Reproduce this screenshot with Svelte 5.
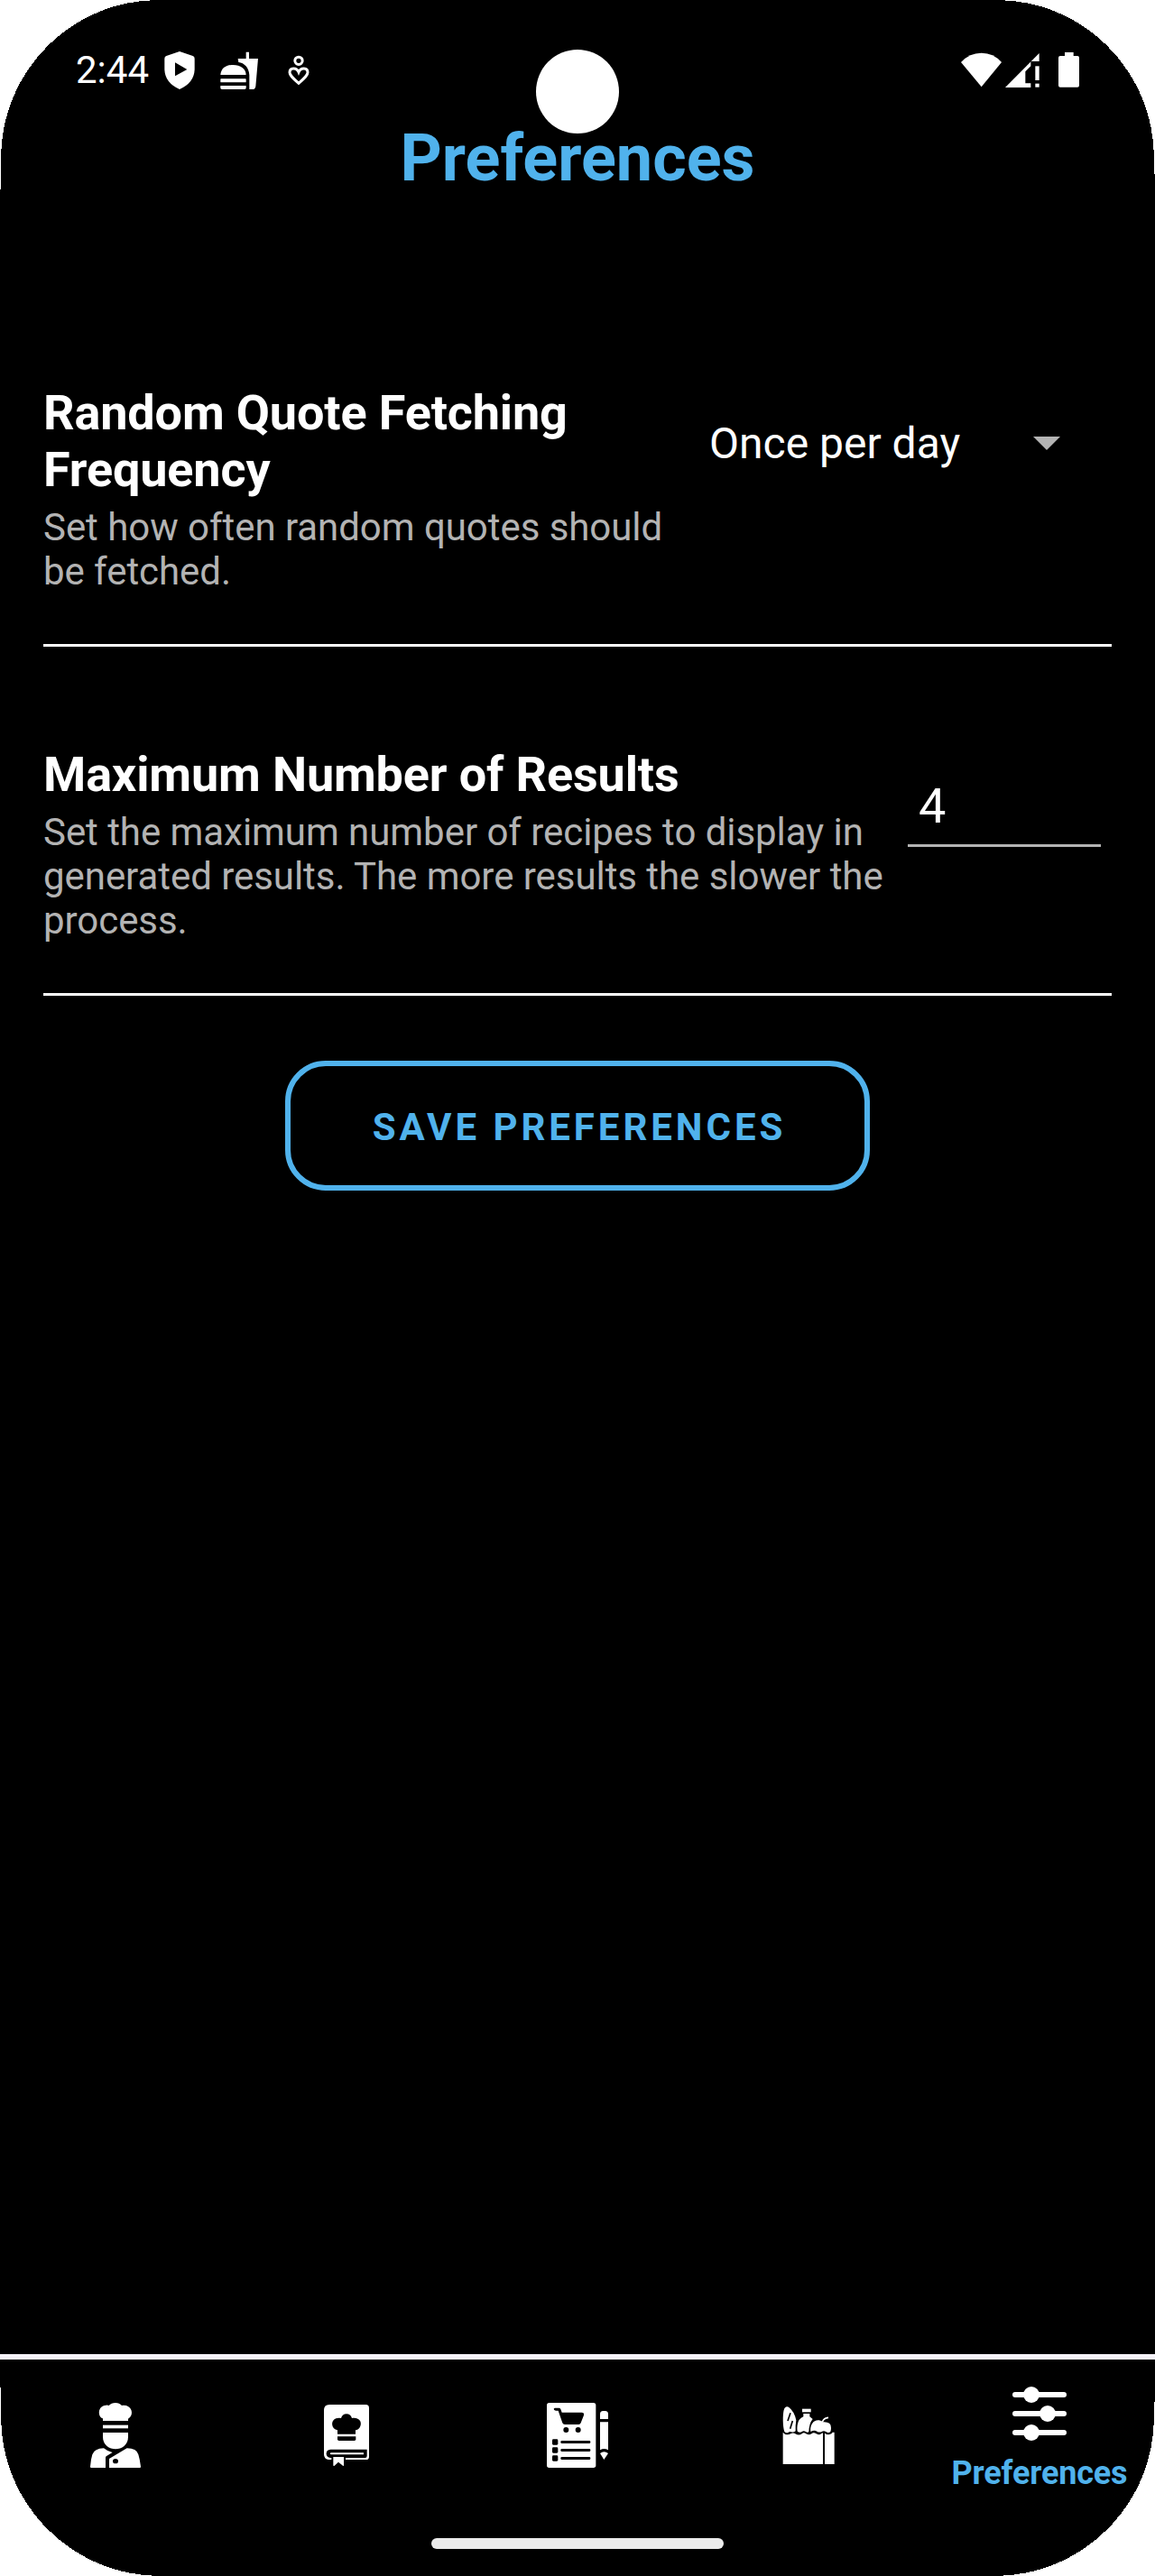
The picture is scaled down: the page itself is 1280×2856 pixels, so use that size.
<script>
  let frequency = $state('Once per day');
  let maxResults = $state('4');
</script>

<div class="phone">
  <div class="status">
    <span class="time">2:44</span>
    <svg class="shield" viewBox="540 156 114 150"><path fill-rule="evenodd" d="M597 171 L641 186 Q647 188 647 195 V232 Q645 276 597 297 Q549 276 547 232 V195 Q547 188 553 186Z M582 208 V253 L622 231Z" /></svg>
    <svg class="burger" viewBox="726 156 138 150">
      <path d="M733 249 C735 226 752 216 775 216 C800 216 817 228 818 249Z" />
      <rect x="733" y="262" width="85" height="12" rx="2" />
      <path d="M733 285 H818 V292 Q818 297 813 297 H738 Q733 297 733 292Z" />
      <path d="M791 195 H818 V173 H828 V195 H858 L850 287 Q848 297 840 297 H829 V250 C828 225 812 209 793 207Z" />
    </svg>
    <svg class="person" viewBox="951 156 84 150">
      <g class="outline">
        <circle cx="993" cy="202" r="12.5" />
        <path d="M993 240 C986 223 963 224 963 241 C963 251 975 261 993 277 C1011 261 1023 251 1023 241 C1023 224 1000 223 993 240Z" />
      </g>
    </svg>
    <span class="spacer"></span>
    <svg class="wifi" viewBox="189 156 147 150"><path d="M263 289 L195 207 Q223 176 263 176 Q303 176 330 207Z" /></svg>
    <svg class="signal" viewBox="336 156 126 150">
      <path d="M342 291 L455 177 V204 H427 V220 L409 238 V277 H427 V291Z" />
      <rect x="442" y="220" width="13" height="47" />
      <rect x="442" y="278" width="13" height="12" />
    </svg>
    <svg class="battery" viewBox="513 156 81 150"><path d="M540 174 H569 V186 H582 Q588 186 588 192 V284 Q588 290 582 290 H525 Q519 290 519 284 V192 Q519 186 525 186 H540Z" /></svg>
  </div>

  <h1>Preferences</h1>

  <main>
    <section class="setting">
      <div class="copy narrow">
        <h2>Random Quote Fetching Frequency</h2>
        <p>Set how often random quotes should be fetched.</p>
      </div>
      <div class="dropdown">
        <span>{frequency}</span>
        <svg viewBox="0 0 30 15"><path d="M0 0H30L15 15Z" /></svg>
      </div>
    </section>

    <section class="setting">
      <div class="copy wide">
        <h2>Maximum Number of Results</h2>
        <p>Set the maximum number of recipes to display in generated results. The more results the slower the process.</p>
      </div>
      <input type="text" aria-label="Maximum Number of Results" bind:value={maxResults} />
    </section>

    <button class="save">SAVE PREFERENCES</button>
  </main>

  <nav>
    <div class="tab">
      <svg viewBox="96 222 216 216">
        <path d="M162 282 V274 C144 268 144 232 172 230 Q178 229 182 231 Q190 222 204 222 Q217 222 225 231 C252 226 263 250 256 264 Q253 271 246 275 V282Z" />
        <rect x="162" y="296" width="84" height="11" />
        <path d="M162 321 H246 V336 C246 362 224 376 204 376 C184 376 162 362 162 336Z" />
        <path d="M120 434 Q122 410 127 394 Q134 374 165 373 Q178 384 194 387 L173 400 Q171 402 171 405 V438 H123 Q120 438 120 434Z" />
        <path fill-rule="evenodd" d="M183 438 V408 L242 373 Q274 373 280 394 Q285 410 288 434 Q288 438 285 438Z M195 416 a9 8 0 1 0 18 0 a9 8 0 1 0 -18 0Z" />
      </svg>
    </div>
    <div class="tab">
      <svg viewBox="864 222 216 216">
        <path d="M915 228 H1036 Q1047 228 1047 239 V401 Q1047 411 1037 411 H913 Q897 410 897 393 V246 Q897 228 915 228Z" />
        <path class="cut" d="M942 326 V313 C922 311 917 281 937 274 Q946 271 954 273 Q958 259 972 259 Q986 259 990 273 C1010 269 1023 282 1019 296 Q1016 310 1002 313 V326Z" />
        <path class="cut" d="M942 334 H1003 V343 Q1003 348 998 348 H947 Q942 348 942 343Z" />
        <path class="cut" d="M1040 377 V399 Q1040 405 1034 405 H919 Q905 404 905 391 Q905 378 919 377Z" />
        <path d="M922 388 H1029 V394 H922 Q917 394 917 391 Q917 388 922 388Z" />
        <rect class="cut" x="922" y="400" width="47" height="14" />
        <path d="M928 402 H963 V429 Q963 433 960 431 L945 419 L932 431 Q928 433 928 429Z" />
      </svg>
    </div>
    <div class="tab">
      <svg viewBox="132 222 216 216">
        <rect x="138" y="222" width="163" height="216" rx="8" />
        <g class="cut">
          <path d="M164 239 H178 Q182 239 184 243 L188 254 H254 Q263 254 261 263 L251 289 Q249 294 244 294 H198 Q192 294 190 289 L176 248 H168 Q161 247 161 242Z" />
          <circle cx="202" cy="312" r="9" />
          <circle cx="242" cy="312" r="9" />
          <rect x="156" y="343" width="19" height="19" rx="4" />
          <rect x="156" y="370" width="19" height="19" rx="4" />
          <rect x="156" y="397" width="19" height="19" rx="4" />
          <rect x="184" y="348" width="99" height="9" rx="4" />
          <rect x="184" y="375" width="99" height="9" rx="4" />
          <rect x="184" y="402" width="99" height="9" rx="4" />
        </g>
        <path d="M315 276 V260 Q315 249 325 249 H332 Q342 249 342 260 V276Z" />
        <path d="M315 286 H342 V379 Q328 371 315 379Z" />
        <path d="M315 390 Q328 380 342 390 L328 411Z" />
      </svg>
    </div>
    <div class="tab">
      <svg viewBox="900 222 216 216">
        <path d="M928 318 C922 300 922 262 926 246 Q930 232 942 236 Q961 250 967 280 Q964 298 965 316 Q958 321 951 319 Q945 317 940 321 Q934 324 928 318Z" />
        <path class="slash" d="M948 256 L939 282 M955 282 L947 308" />
        <rect x="987" y="242" width="29" height="11" />
        <path d="M991 258 H1012 V268 L1022 276 Q1010 290 1009 319 Q1003 322 999 318 Q992 313 986 318 Q980 323 972 318 Q969 312 971 296 Q974 275 991 268Z" />
        <path d="M1015 318 C1012 295 1025 278 1043 280 Q1051 281 1056 286 Q1083 284 1083 305 Q1083 314 1081 318 Q1076 323 1070 320 Q1060 312 1052 318 Q1044 322 1036 317 Q1028 311 1015 318Z" />
        <path class="stem" d="M1054 286 Q1059 272 1074 271" />
        <path d="M923 320 Q930 329 938 328 Q944 328 950 324 Q957 320 964 325 Q976 332 986 325 Q992 319 1000 325 Q1010 331 1018 325 Q1025 319 1034 325 Q1044 331 1050 325 L1056 322 V426 H923Z" />
        <path d="M1062 323 Q1070 329 1078 327 Q1085 326 1088 320 H1094 V426 H1062Z" />
      </svg>
    </div>
    <div class="tab active">
      <svg viewBox="348 150 216 216">
        <rect x="366" y="186" width="180" height="18" rx="9" />
        <rect x="366" y="249" width="180" height="18" rx="9" />
        <rect x="366" y="312" width="180" height="18" rx="9" />
        <circle cx="429" cy="195" r="27" />
        <circle cx="483" cy="258" r="27" />
        <circle cx="429" cy="321" r="27" />
      </svg>
      <span>Preferences</span>
    </div>
  </nav>

  <!-- display cut-outs and gesture bar float above the app -->
  <div class="camera"></div>
  <div class="gesture"></div>
  <svg class="corner tl" viewBox="0 0 180 210"><path d="M0 0H176A175 176 0 0 0 1 176V210H0Z" /></svg>
  <svg class="corner tr" viewBox="0 0 180 210"><path d="M180 0H4A175 176 0 0 1 179 176V193H180Z" /></svg>
  <svg class="corner bl" viewBox="0 0 180 210"><path d="M0 210H178A177 177 0 0 1 1 33V1H0Z" /></svg>
  <svg class="corner br" viewBox="0 0 180 210"><path d="M180 210H2A177 177 0 0 0 179 33V17H180Z" /></svg>
</div>

<style>
  :global(body) {
    margin: 0;
    background: #000;
  }
  .phone {
    position: relative;
    display: flex;
    flex-direction: column;
    width: 1280px;
    height: 2856px;
    overflow: hidden;
    background: #000;
    color: #fff;
    font-family: Roboto, "Liberation Sans", sans-serif;
  }
  svg {
    display: block;
    flex: none;
    fill: #fff;
  }
  h1, h2, p {
    margin: 0;
  }
  .status {
    display: flex;
    box-sizing: border-box;
    height: 134px;
    padding: 52px 82px 0 84px;
  }
  .status svg {
    height: 50px;
  }
  .time {
    width: 96px;
    font-size: 42px;
    line-height: 52px;
  }
  .shield { width: 38px; }
  .burger { width: 46px; margin-left: 24px; }
  .person { width: 28px; margin-left: 29px; }
  .spacer { flex: 1; }
  .wifi { width: 49px; }
  .signal { width: 42px; }
  .battery { width: 27px; margin-left: 17px; }
  .outline {
    fill: none;
    stroke: #fff;
    stroke-width: 9;
  }
  h1 {
    color: #50b2ec;
    font-size: 72px;
    font-weight: 700;
    line-height: 84px;
    text-align: center;
  }
  main {
    display: flex;
    flex: 1;
    flex-direction: column;
    padding: 98px 48px 0;
  }
  .setting {
    display: flex;
    justify-content: space-between;
    align-items: flex-start;
    padding: 110px 0 56px;
    border-bottom: 3px solid #fff;
  }
  .narrow { width: 720px; }
  .wide { width: 942px; }
  h2 {
    margin-bottom: 8px;
    font-size: 54px;
    font-weight: 700;
    line-height: 63px;
    letter-spacing: -0.15px;
  }
  p {
    color: #b3b3b3;
    font-size: 42px;
    line-height: 49px;
    letter-spacing: -0.05px;
  }
  .dropdown {
    display: flex;
    justify-content: space-between;
    align-items: center;
    box-sizing: border-box;
    width: 446px;
    margin-top: 38px;
    padding-right: 57px;
    font-size: 48px;
    line-height: 56px;
  }
  .dropdown svg {
    width: 30px;
    height: 15px;
    margin-bottom: 2px;
    fill: #b3b3b3;
  }
  input {
    box-sizing: border-box;
    width: 214px;
    height: 77px;
    margin: 35px 12px 0 0;
    padding: 0 12px 11px;
    border: 0;
    border-bottom: 3px solid #b3b3b3;
    border-radius: 0;
    outline: 0;
    background: none;
    color: #fff;
    font: 54px/63px Roboto, "Liberation Sans", sans-serif;
  }
  .save {
    align-self: center;
    width: 648px;
    height: 144px;
    margin-top: 72px;
    padding: 3px 0 0 4px;
    border: 6px solid #50b2ec;
    border-radius: 45px;
    background: none;
    color: #50b2ec;
    font: 700 42px/49px Roboto, "Liberation Sans", sans-serif;
    letter-spacing: 3.95px;
  }
  nav {
    display: flex;
    box-sizing: border-box;
    height: 246px;
    border-top: 6px solid #f6f3fa;
  }
  .tab {
    display: flex;
    flex: 1;
    flex-direction: column;
    align-items: center;
    padding-top: 48px;
  }
  .tab svg {
    width: 72px;
    height: 72px;
  }
  .active {
    padding-top: 24px;
  }
  .active span {
    margin-top: 9px;
    color: #50b2ec;
    font-size: 36px;
    font-weight: 700;
    line-height: 42px;
    letter-spacing: -0.15px;
  }
  .cut {
    fill: #000;
  }
  .slash {
    stroke: #000;
    stroke-width: 5;
  }
  .stem {
    fill: none;
    stroke: #fff;
    stroke-width: 5;
  }
  .camera {
    position: absolute;
    top: 55px;
    left: 594px;
    width: 92px;
    height: 93px;
    border-radius: 50%;
    background: #fff;
  }
  .gesture {
    position: absolute;
    bottom: 30px;
    left: 478px;
    width: 324px;
    height: 12px;
    border-radius: 6px;
    background: #ebebeb;
  }
  .corner {
    position: absolute;
    width: 180px;
    height: 210px;
    shape-rendering: crispEdges;
  }
  .tl { top: 0; left: 0; }
  .tr { top: 0; right: 0; }
  .bl { bottom: 0; left: 0; }
  .br { bottom: 0; right: 0; }
</style>
